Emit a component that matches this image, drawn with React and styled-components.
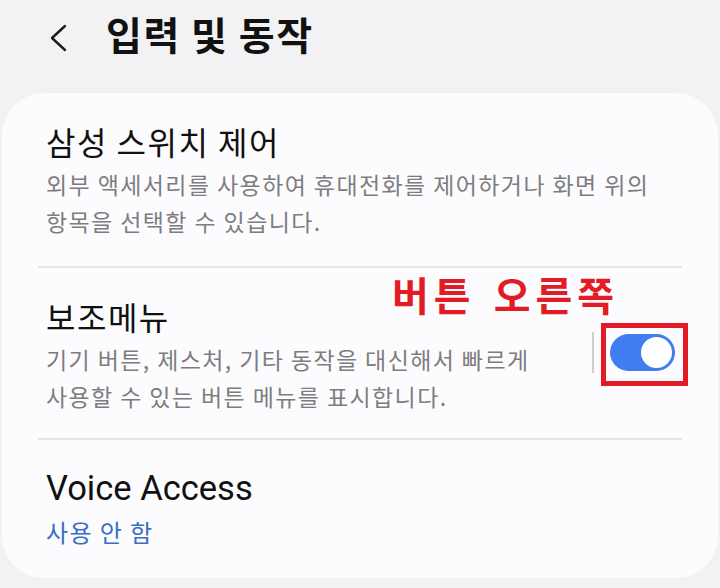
import React from "react";
import styled, { createGlobalStyle } from "styled-components";

const GlobalStyle = createGlobalStyle`
  html, body {
    margin: 0;
    padding: 0;
    background: #f2f2f4;
  }
  body {
    width: 720px;
    height: 588px;
    overflow: hidden;
    font-family: "Noto Sans CJK KR", Roboto, sans-serif;
  }
`;

const Header = styled.header`
  display: flex;
  align-items: center;
  height: 93px;
  padding-left: 48px;
  box-sizing: border-box;
  gap: 38px;
`;

const Title = styled.h1`
  margin: 0;
  font-size: 39px;
  font-weight: 700;
  letter-spacing: 1.5px;
  color: #111;
  line-height: 1;
  padding-bottom: 26px;
`;

const BackIcon = styled.svg`
  width: 20px;
  height: 28px;
  margin-bottom: 18px;
`;

const Card = styled.section`
  position: relative;
  margin: 0 2px;
  background: #fcfcfe;
  border-radius: 42px;
  overflow: hidden;
`;

const Item = styled.div`
  display: flex;
  align-items: center;
  padding: 28px 43px ${(p) => p.$bottom || 26}px 44px;
`;

const TextCol = styled.div`
  flex: 1;
  min-width: 0;
`;

const ItemTitle = styled.div`
  font-family: ${(p) =>
    p.latin ? 'Roboto, "Noto Sans CJK KR", sans-serif' : '"Noto Sans CJK KR", Roboto, sans-serif'};
  font-size: ${(p) => (p.latin ? "34.5px" : "32px")};
  letter-spacing: ${(p) => (p.latin ? "0" : "1.5px")};
  line-height: 40px;
  color: #111;
`;

const ItemDesc = styled.div`
  margin-top: 5px;
  font-size: ${(p) => (p.accent ? "24px" : "23px")};
  letter-spacing: 1.4px;
  line-height: 37px;
  color: ${(p) => (p.accent ? "#3b6dc1" : "#7d7d80")};
`;

const Divider = styled.div`
  height: 2px;
  margin: 0 36px;
  background: #e4e4e7;
`;

const VSep = styled.div`
  width: 2px;
  height: 41px;
  background: #cfcfd2;
  margin-top: -6px;
`;

const ToggleWrap = styled.div`
  position: relative;
  margin-left: 16px;
  margin-top: -7px;
`;

const Toggle = styled.div`
  position: relative;
  width: 65px;
  height: 37px;
  border-radius: 19px;
  background: ${(p) => (p.on ? "#3e7ef0" : "#bdbdc1")};
`;

const Knob = styled.div`
  position: absolute;
  top: 3px;
  ${(p) => (p.on ? "right: 3px;" : "left: 3px;")}
  width: 31px;
  height: 31px;
  border-radius: 50%;
  background: #fff;
`;

const Highlight = styled.div`
  position: absolute;
  top: -11px;
  left: -9px;
  right: -13px;
  bottom: -15px;
  border: 5px solid #e21b25;
`;

const Annotation = styled.div`
  position: absolute;
  top: 181px;
  left: 390px;
  font-size: 40px;
  font-weight: 700;
  line-height: 1;
  letter-spacing: 5px;
  word-spacing: 4px;
  color: #e21b25;
`;

export default function App() {
  return (
    <>
      <GlobalStyle />
      <Header>
        <BackIcon viewBox="0 0 20 28">
          <path
            d="M17 2 L4 14 L17 26"
            fill="none"
            stroke="#1a1a1a"
            strokeWidth="2.4"
            strokeLinecap="round"
            strokeLinejoin="round"
          />
        </BackIcon>
        <Title>입력 및 동작</Title>
      </Header>
      <Card>
        <Item>
          <TextCol>
            <ItemTitle>삼성 스위치 제어</ItemTitle>
            <ItemDesc>
              외부 액세서리를 사용하여 휴대전화를 제어하거나 화면 위의
              <br />
              항목을 선택할 수 있습니다.
            </ItemDesc>
          </TextCol>
        </Item>
        <Divider />
        <Item $bottom={23}>
          <TextCol>
            <ItemTitle>보조메뉴</ItemTitle>
            <ItemDesc>
              기기 버튼, 제스처, 기타 동작을 대신해서 빠르게
              <br />
              사용할 수 있는 버튼 메뉴를 표시합니다.
            </ItemDesc>
          </TextCol>
          <VSep />
          <ToggleWrap>
            <Toggle on>
              <Knob on />
            </Toggle>
            <Highlight />
          </ToggleWrap>
        </Item>
        <Divider />
        <Item $bottom={28}>
          <TextCol>
            <ItemTitle latin>Voice Access</ItemTitle>
            <ItemDesc accent>사용 안 함</ItemDesc>
          </TextCol>
        </Item>
        <Annotation>버튼 오른쪽</Annotation>
      </Card>
    </>
  );
}
